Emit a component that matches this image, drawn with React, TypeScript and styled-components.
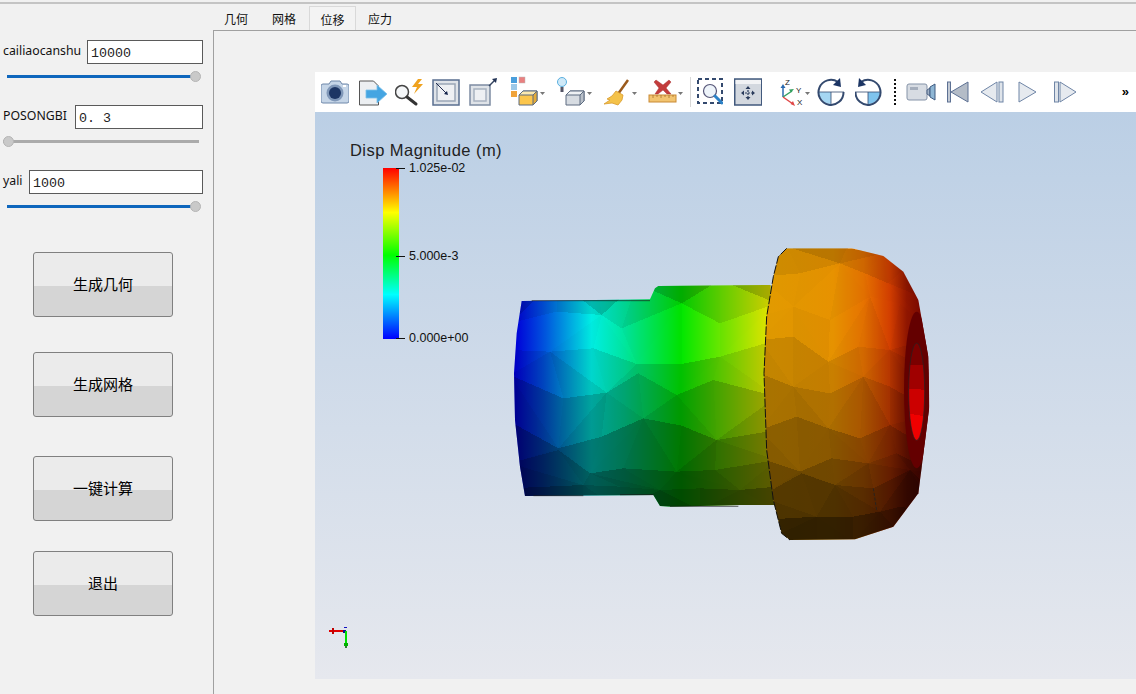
import React, { FC, ReactNode } from 'react';
import styled, { createGlobalStyle } from 'styled-components';

const GlobalStyle = createGlobalStyle`
  html, body { margin: 0; padding: 0; background: #f1f1f1; }
  body { font-family: "Noto Sans", "Noto Sans CJK SC", sans-serif; color: #000; }
`;

const Page = styled.div`
  width: 1136px;
  height: 694px;
  overflow: hidden;
  display: flex;
  flex-direction: column;
  background: #f1f1f1;
`;

const TopEdge = styled.div`
  height: 2px;
  margin-top: 2px;
  background: #c4c4c4;
  flex: none;
`;

const Body = styled.div`
  flex: 1;
  display: grid;
  grid-template-columns: 213px 1fr;
  min-height: 0;
`;

const Sidebar = styled.div`
  display: flex;
  flex-direction: column;
  padding-top: 36px;
`;

const ParamRow = styled.div`
  display: flex;
  align-items: center;
  justify-content: space-between;
  height: 24px;
  padding: 0 10px 0 3px;
`;

const ParamLabel = styled.span`
  font-size: 12.3px;
  line-height: 16px;
  margin-top: -3px;
  color: #111;
  white-space: nowrap;
`;

const ParamInput = styled.div<{ $w: number }>`
  width: ${(p) => p.$w}px;
  height: 24px;
  box-sizing: border-box;
  border: 1px solid #5a5a5a;
  background: #fff;
  padding: 1px 0 0 3px;
  font: 13.33px/23px "Liberation Mono", monospace;
  color: #222;
`;

const SliderTrack = styled.div<{ $on: boolean }>`
  position: relative;
  height: 3px;
  margin-top: 11px;
  margin-bottom: 27px;
  background: ${(p) => (p.$on ? '#0f67bd' : '#ababab')};
  margin-left: ${(p) => (p.$on ? '7px' : '3px')};
  margin-right: ${(p) => (p.$on ? '17px' : '14px')};
`;

const SliderKnob = styled.div<{ $on: boolean }>`
  position: absolute;
  top: -4px;
  ${(p) => (p.$on ? 'right: -5px;' : 'left: 0;')}
  width: 11px;
  height: 11px;
  box-sizing: border-box;
  border-radius: 50%;
  background: #c9c9c9;
  border: 1px solid #b5b5b5;
`;

const ActionButton = styled.div<{ $mt: number }>`
  width: 140px;
  height: 65px;
  box-sizing: border-box;
  margin: ${(p) => p.$mt}px 0 0 33px;
  border: 1px solid #808080;
  border-radius: 3px;
  background: linear-gradient(#ebebeb 0 52%, #d5d5d5 52% 100%);
  display: flex;
  align-items: center;
  justify-content: center;
  font: 15px/20px "Noto Sans CJK SC", sans-serif;
  padding-bottom: 1px;
`;

const Main = styled.div`
  display: flex;
  flex-direction: column;
  min-width: 0;
`;

const TabBar = styled.div`
  height: 24px;
  margin: 2px 0 0 -1px;
  display: flex;
  align-items: stretch;
  flex: none;
`;

const Tab = styled.div<{ $active?: boolean }>`
  width: 48px;
  box-sizing: border-box;
  padding-top: 2px;
  display: flex;
  align-items: center;
  justify-content: center;
  font: 12px/16px "Noto Sans CJK SC", sans-serif;
  color: #111;
  ${(p) =>
    p.$active ? 'border: 1px solid #d9d9d9; border-bottom: 0; background: #f3f3f3; margin: 0 0 0 1px; width: 47px;' : ''}
`;

const Pane = styled.div`
  flex: 1;
  border-left: 1px solid #a0a0a0;
  border-top: 1px solid #a0a0a0;
  padding: 41px 0 15px 101px;
  display: flex;
  flex-direction: column;
  min-height: 0;
`;

const Toolbar = styled.div`
  height: 40px;
  background: #fff;
  display: flex;
  align-items: center;
  padding-left: 6px;
  flex: none;
`;

const ToolSlot = styled.div<{ $gap: number }>`
  margin-left: ${(p) => p.$gap}px;
  height: 40px;
  flex: none;
  svg { display: block; }
`;

const ToolSeparator = styled.div<{ $gap: number }>`
  margin-left: ${(p) => p.$gap}px;
  width: 1px;
  height: 30px;
  background: #d8d8d8;
  flex: none;
`;

const DottedSeparator = styled.div<{ $gap: number }>`
  margin-left: ${(p) => p.$gap}px;
  width: 0;
  height: 26px;
  border-left: 2px dotted #111;
  flex: none;
`;

const Overflow = styled.div`
  margin-left: auto;
  padding-right: 7px;
  font: bold 13px/16px "Liberation Sans", sans-serif;
`;

const Scene = styled.div`
  flex: 1;
  position: relative;
  background: linear-gradient(#bbcfe5, #e6e8ee);
  overflow: hidden;
`;

const ScaleBar = styled.div`
  position: absolute;
  left: 35px;
  top: 28px;
  width: 170px;
  height: 210px;
`;

const ScaleTitle = styled.div`
  font: 16.5px/20px "Liberation Sans", sans-serif;
  letter-spacing: 0.45px;
  color: #222;
  white-space: nowrap;
`;

const ColorRamp = styled.div`
  position: absolute;
  left: 33px;
  top: 28px;
  width: 16px;
  height: 171px;
  background: linear-gradient(#ff0000 0, #ffff00 26%, #00ff00 51%, #00ffff 74%, #0000ff 100%);
`;

const ScaleTick = styled.div<{ $top: number }>`
  position: absolute;
  left: 46px;
  top: ${(p) => p.$top}px;
  width: 9px;
  height: 1px;
  background: #111;
`;

const ScaleValue = styled.div<{ $top: number }>`
  position: absolute;
  left: 59px;
  top: ${(p) => p.$top - 7}px;
  font: 12.5px/15px "Liberation Sans", sans-serif;
  color: #111;
  white-space: nowrap;
`;

const ModelLayer = styled.svg`
  position: absolute;
  left: 185px;
  top: 128px;
`;

const AxesLayer = styled.svg`
  position: absolute;
  left: 10px;
  bottom: 24px;
`;

// ---- mesh ----
type Pt = [number, number];

const shaftRows: Pt[][] = [
  [[30, 110], [170, 120], [290, 125], [410, 130], [545, 125], [660, 120], [830, 110]],
  [[30, 250], [170, 215], [305, 225], [365, 265], [545, 190], [660, 250], [830, 190]],
  [[30, 330], [150, 335], [280, 325], [410, 372], [545, 372], [660, 350], [830, 300]],
  [[30, 405], [190, 475], [320, 458], [415, 400], [530, 465], [640, 420], [830, 470]],
  [[30, 545], [175, 625], [305, 590], [430, 535], [545, 557], [650, 600], [830, 570]],
  [[30, 670], [175, 630], [270, 700], [370, 685], [530, 695], [645, 690], [830, 660]],
  [[30, 745], [250, 735], [360, 740], [480, 750], [600, 745], [720, 750], [830, 740]],
  [[30, 810], [250, 810], [360, 810], [480, 810], [600, 810], [720, 810], [830, 810]],
];

const headRows: Pt[][] = [
  [[780, 10], [860, 20], [1040, 25], [1150, 40], [1210, 90], [1310, 150]],
  [[780, 110], [900, 100], [1020, 70], [1095, 100], [1165, 130], [1310, 190]],
  [[780, 230], [880, 200], [990, 240], [1110, 170], [1200, 190], [1310, 290]],
  [[780, 300], [880, 290], [985, 365], [1075, 320], [1170, 330], [1310, 400]],
  [[780, 400], [880, 440], [990, 460], [1090, 410], [1170, 440], [1310, 520]],
  [[780, 570], [890, 530], [985, 565], [1080, 595], [1170, 555], [1310, 640]],
  [[780, 655], [900, 695], [995, 655], [1105, 670], [1190, 640], [1310, 700]],
  [[780, 770], [905, 700], [1005, 735], [1120, 745], [1230, 690], [1310, 770]],
  [[780, 840], [950, 830], [1060, 830], [1140, 815], [1200, 800], [1310, 820]],
  [[780, 910], [950, 905], [1060, 905], [1140, 890], [1190, 870], [1310, 870]],
];

const lerpTable = (table: Pt[], v: number) => {
  for (let i = 1; i < table.length; i++) {
    if (v <= table[i][0]) {
      const [x0, y0] = table[i - 1];
      const [x1, y1] = table[i];
      return y0 + ((y1 - y0) * (Math.max(v, x0) - x0)) / (x1 - x0);
    }
  }
  return table[table.length - 1][1];
};

const shaftShade: Pt[] = [[130, 0.62], [170, 0.82], [200, 1], [300, 1], [400, 0.86], [500, 0.72], [650, 0.5], [740, 0.36], [800, 0.3]];
const headShade: Pt[] = [[25, 0.72], [60, 0.9], [100, 0.95], [230, 1], [400, 0.86], [500, 0.74], [650, 0.55], [750, 0.4], [880, 0.22]];

const facets = (rows: Pt[][], table: Pt[]) => {
  const out: { points: string; dark: number }[] = [];
  let seed = 7;
  for (let r = 0; r < rows.length - 1; r++) {
    const midY = (rows[r][2][1] + rows[r + 1][2][1]) / 2;
    for (let c = 0; c < rows[r].length - 1; c++) {
      const a = rows[r][c];
      const b = rows[r][c + 1];
      const d = rows[r + 1][c];
      const e = rows[r + 1][c + 1];
      const tris: Pt[][] = (r + c) % 2 ? [[a, b, e], [a, e, d]] : [[a, b, d], [b, e, d]];
      tris.forEach((t) => {
        seed = (seed * 31 + 11) % 101;
        const cy = (t[0][1] + t[1][1] + t[2][1]) / 3;
        const shade = 0.6 * lerpTable(table, cy) + 0.4 * lerpTable(table, midY) - (seed / 101) * 0.035;
        out.push({
          points: t.map((p) => p.join(',')).join(' '),
          dark: Math.max(0, Math.min(1, 1 - shade)),
        });
      });
    }
  }
  return out;
};

const shaftOutline =
  '65,183 450,178 465,145 475,138 812,135 832,795 720,795 510,800 480,798 460,765 75,768 60,680 45,540 42,400 50,280';
const headOutline =
  '860,25 1055,25 1150,48 1210,95 1255,180 1285,350 1288,500 1255,760 1180,860 1065,898 870,900 845,880 820,780 800,630 792,400 800,230 820,110 835,50';

const MeshModel: FC = () => (
  <ModelLayer width={440} height={310} viewBox="0 0 1320 930">
    <defs>
      <linearGradient id="shaftMap" gradientUnits="userSpaceOnUse" x1="45" y1="0" x2="810" y2="0">
        <stop offset="0" stopColor="#0000dc" />
        <stop offset="0.11" stopColor="#0050e0" />
        <stop offset="0.3" stopColor="#00f2e8" />
        <stop offset="0.43" stopColor="#00e8a0" />
        <stop offset="0.65" stopColor="#00e800" />
        <stop offset="0.79" stopColor="#60e800" />
        <stop offset="1" stopColor="#e8e800" />
      </linearGradient>
      <linearGradient id="headMap" gradientUnits="userSpaceOnUse" x1="790" y1="0" x2="1290" y2="0">
        <stop offset="0" stopColor="#e8a000" />
        <stop offset="0.42" stopColor="#f09800" />
        <stop offset="0.6" stopColor="#f07800" />
        <stop offset="0.76" stopColor="#d84000" />
        <stop offset="0.86" stopColor="#981800" />
        <stop offset="1" stopColor="#700000" />
      </linearGradient>
      <clipPath id="shaftClip"><polygon points={shaftOutline} /></clipPath>
      <clipPath id="headClip"><polygon points={headOutline} /></clipPath>
    </defs>
    <g clipPath="url(#shaftClip)">
      <rect x="0" y="100" width="860" height="730" fill="url(#shaftMap)" />
      {facets(shaftRows, shaftShade).map((f, i) => (
        <polygon key={i} points={f.points} fill="#000" fillOpacity={f.dark} shapeRendering="crispEdges" />
      ))}
    </g>
    <path d="M95 182H450M100 767H250M360 764H460M510 799H715" stroke="#1a1a1a" strokeWidth="2" fill="none" />
    <g clipPath="url(#headClip)">
      <rect x="780" y="0" width="540" height="930" fill="url(#headMap)" />
      {facets(headRows, headShade).map((f, i) => (
        <polygon key={i} points={f.points} fill="#000" fillOpacity={f.dark} shapeRendering="crispEdges" />
      ))}
      <ellipse cx="1250" cy="450" rx="38" ry="235" fill="#640000" />
    </g>
    <clipPath id="holeClip"><ellipse cx="1250" cy="455" rx="24" ry="146" /></clipPath>
    <g clipPath="url(#holeClip)" shapeRendering="crispEdges">
      <rect x="1220" y="305" width="60" height="72" fill="#7a0000" />
      <polygon points="1220,375 1280,375 1280,450 1220,445" fill="#a00000" />
      <polygon points="1220,445 1280,450 1280,530 1220,520" fill="#cc0000" />
      <polygon points="1220,520 1280,530 1280,610 1220,610" fill="#f00000" />
    </g>
    <ellipse cx="1250" cy="455" rx="24" ry="146" fill="none" stroke="#222" strokeWidth="2" />
    <path
      d="M860 25L835 50L820 110L800 230L792 400L800 630L820 780L845 880L870 900"
      fill="none"
      stroke="#111"
      strokeWidth="3"
      strokeDasharray="26 5"
    />
    <path d="M1120 745L1130 812" fill="none" stroke="#222" strokeWidth="2.5" strokeDasharray="9 5" />
  </ModelLayer>
);

// ---- toolbar icons ----
const Ico: FC<{ w: number; gap: number; children: ReactNode }> = ({ w, gap, children }) => (
  <ToolSlot $gap={gap}>
    <svg width={w} height={40} viewBox={`0 0 ${w} 40`}>{children}</svg>
  </ToolSlot>
);

const Caret: FC<{ x: number; y: number }> = ({ x, y }) => <path d={`M${x} ${y}h5l-2.5 3z`} fill="#777" />;

const Cube: FC<{ x: number; y: number; fill: string; top: string; side: string }> = ({ x, y, fill, top, side }) => (
  <g stroke="#5c6b80" strokeWidth="1" strokeLinejoin="round">
    <path d={`M${x} ${y + 4}l4-4h14v10l-4 4h-14z`} fill={fill} />
    <path d={`M${x} ${y + 4}l4-4h14l-4 4z`} fill={top} />
    <path d={`M${x + 14} ${y + 4}l4-4v10l-4 4z`} fill={side} />
  </g>
);

const Toolbox: FC = () => (
  <Toolbar>
    {/* camera */}
    <Ico w={28} gap={0}>
      <path d="M2 12h6l2-3h9l2 3h5q2 0 2 2v15q0 2-2 2H2q-2 0-2-2V14q0-2 2-2z" fill="#c5d5e7" stroke="#6f88aa" />
      <circle cx="14" cy="21" r="8.5" fill="#7f97b8" />
      <circle cx="14" cy="21" r="6" fill="#1c3564" />
      <rect x="22" y="13" width="3" height="2" fill="#fff" />
    </Ico>
    {/* save data */}
    <Ico w={28} gap={10}>
      <path d="M0.5 9h14l5 5v19h-19z" fill="#eceff2" stroke="#555" />
      <path d="M7 18h11v-5l10 9-10 9v-5H7z" fill="#45a5e2" stroke="#7cc0ea" strokeWidth="0.8" />
    </Ico>
    {/* reset / auto-apply zoom */}
    <Ico w={28} gap={8}>
      <circle cx="7" cy="20" r="6.5" fill="#f4f6f8" stroke="#444" strokeWidth="1.5" />
      <path d="M12 25l9 7" stroke="#333" strokeWidth="3" strokeLinecap="round" />
      <path d="M23 7l-6 8h5l-3 7 9-10h-5l4-5z" fill="#efa21e" />
    </Ico>
    <Ico w={28} gap={9}>
      <rect x="1" y="8" width="26" height="25" fill="#dfe3e8" stroke="#5a6f90" strokeWidth="1.5" />
      <rect x="5" y="12" width="18" height="17" fill="#eef0f3" stroke="#9aa6b6" strokeWidth="1.5" />
      <path d="M4 11l11 11" stroke="#222c50" strokeWidth="1" />
      <path d="M16 23l-4-1 3-3z" fill="#14244c" />
    </Ico>
    <Ico w={28} gap={9}>
      <rect x="1" y="13" width="20" height="20" fill="#dfe3e8" stroke="#7d8ca3" strokeWidth="1.5" />
      <rect x="5" y="17" width="12" height="12" fill="#eef0f3" stroke="#a8b2c0" strokeWidth="1.5" />
      <path d="M20 14l6-6" stroke="#33435f" strokeWidth="1.5" />
      <path d="M28 6l-5 1 4 4z" fill="#223355" />
    </Ico>
    {/* representation cube */}
    <Ico w={35} gap={13}>
      <rect x="1" y="5" width="6" height="6" fill="#4a9fdc" />
      <rect x="9" y="5" width="6" height="6" fill="#e98080" stroke="#bbb" strokeWidth="0.5" />
      <rect x="1" y="12" width="6" height="6" fill="#9cc8e8" />
      <rect x="1" y="19" width="6" height="6" fill="#f0a33a" />
      <Cube x={9} y={19} fill="#fcc64c" top="#fbe9b0" side="#e2ab3a" />
      <Caret x={30} y={20} />
    </Ico>
    {/* light cube */}
    <Ico w={36} gap={11}>
      <circle cx="6" cy="10" r="4.5" fill="#cfe9f8" stroke="#5ab0e0" />
      <rect x="4.5" y="15" width="3" height="5" fill="#556" />
      <Cube x={10} y={19} fill="#d7dce2" top="#eef1f4" side="#b9c0c9" />
      <Caret x={31} y={20} />
    </Ico>
    {/* broom */}
    <Ico w={34} gap={11}>
      <path d="M25 8L15 22" stroke="#9a5a1c" strokeWidth="2.5" />
      <path d="M13 19l7 4-1 5-4 5-6-2-8 1 6-4-3-1 5-3z" fill="#f4c24a" stroke="#d89a2c" strokeWidth="0.8" />
      <Caret x={29} y={20} />
    </Ico>
    {/* delete ruler */}
    <Ico w={36} gap={11}>
      <path d="M8 8l7 5 6-5 2 2-5 6 5 6h-4l-4-4-5 4h-3l4-6-5-6z" fill="#c33c3c" stroke="#a33" strokeWidth="0.5" />
      <rect x="1" y="23" width="27" height="7" fill="#f2c470" stroke="#c98a34" />
      <path d="M5 23v3M9 23v2M13 23v3M17 23v2M21 23v3M25 23v2" stroke="#a8742c" strokeWidth="0.8" />
      <Caret x={30} y={20} />
    </Ico>
    <ToolSeparator $gap={6} />
    {/* zoom to box */}
    <Ico w={26} gap={6}>
      <rect x="1" y="7" width="24" height="24" fill="none" stroke="#33496e" strokeWidth="2" strokeDasharray="4 3" />
      <circle cx="13" cy="19" r="6.5" fill="#eef4fa" stroke="#557" strokeWidth="1.2" />
      <path d="M18 24l7 7" stroke="#2c82c8" strokeWidth="3" strokeLinecap="round" />
    </Ico>
    {/* fit */}
    <Ico w={28} gap={11}>
      <rect x="0.75" y="7" width="27" height="26" fill="#d3d8df" stroke="#42597d" strokeWidth="1.5" />
      <rect x="1.5" y="8" width="25.5" height="4" fill="#f2f3f5" />
      <path d="M14 15v12M8 21h12" stroke="#2b3c5c" strokeWidth="1.2" strokeDasharray="2 1" />
      <path d="M14 14l-2.5 3h5zM14 28l-2.5-3h5zM7 21l3-2.5v5zM21 21l-3-2.5v5z" fill="#2b3c5c" />
    </Ico>
    {/* axes */}
    <Ico w={35} gap={18}>
      <path d="M3 25V14" stroke="#2c6bb0" strokeWidth="1.5" />
      <path d="M3 12l-2.500 4h5z" fill="#2c6bb0" />
      <path d="M3 25l9-6" stroke="#35a060" strokeWidth="1.5" />
      <path d="M14 17l-5 .5 2 3z" fill="#35a060" />
      <path d="M3 25l10 7" stroke="#e04848" strokeWidth="1.5" />
      <path d="M15 34l-2-5-2.500 3z" fill="#e04848" />
      <text x="5" y="13" fontFamily="Liberation Sans" fontSize="8" fill="#222">Z</text>
      <text x="16" y="21" fontFamily="Liberation Sans" fontSize="8" fill="#222">Y</text>
      <text x="17" y="33" fontFamily="Liberation Sans" fontSize="8" fill="#222">X</text>
      <Caret x={25} y={20} />
    </Ico>
    {/* rotate right */}
    <Ico w={28} gap={2}>
      <path d="M14 20H2a12 12 0 0 0 12 12z" fill="#a5d6f2" />
      <path d="M21 10A12.5 12.5 0 1 0 26.500 20" fill="none" stroke="#33496e" strokeWidth="2" />
      <path d="M2 20h25M14 20v12" stroke="#33496e" strokeWidth="0.8" />
      <path d="M23 6l1 9-8-2z" fill="#1c3564" />
    </Ico>
    {/* rotate left */}
    <Ico w={27} gap={10}>
      <path d="M13 20h12a12 12 0 0 1-12 12z" fill="#7fc4ee" />
      <path d="M6 10A12.500 12.500 0 1 1 0.500 20" fill="none" stroke="#33496e" strokeWidth="2" />
      <path d="M0 20h25M13 20v12" stroke="#33496e" strokeWidth="0.8" />
      <path d="M4 6l-1 9 8-2z" fill="#1c3564" />
    </Ico>
    <DottedSeparator $gap={12} />
    {/* camera clip */}
    <Ico w={30} gap={10}>
      <rect x="1" y="12" width="20" height="16" rx="2" fill="#d7dce3" stroke="#8593a8" />
      <rect x="4" y="15" width="8" height="3" fill="#a5aebc" />
      <path d="M21 18l3-2v8l-3-2z" fill="#9fb0c5" stroke="#4d6384" />
      <path d="M24 15l5-3v16l-5-3z" fill="#8eb6d4" stroke="#3f5a80" />
    </Ico>
    {/* first frame */}
    <Ico w={22} gap={11}>
      <rect x="0.5" y="10" width="3" height="20" fill="#c3cad4" stroke="#5c7093" />
      <path d="M21 10v20L4 20z" fill="#b4bcc7" stroke="#5c7093" />
    </Ico>
    {/* previous frame */}
    <Ico w={24} gap={11}>
      <path d="M17 10v20L1 20z" fill="#e6eaef" stroke="#6f85a6" />
      <rect x="19" y="10" width="4" height="20" fill="#dfe4ea" stroke="#6f85a6" />
    </Ico>
    {/* play */}
    <Ico w={19} gap={14}>
      <path d="M1 10v20l17-10z" fill="#e6eaef" stroke="#6f85a6" />
    </Ico>
    {/* next frame */}
    <Ico w={23} gap={17}>
      <rect x="0.500" y="10" width="4" height="20" fill="#dfe4ea" stroke="#6f85a6" />
      <path d="M6 10v20l16-10z" fill="#e6eaef" stroke="#6f85a6" />
    </Ico>
    <Overflow>»</Overflow>
  </Toolbar>
);

const Axes: FC = () => (
  <AxesLayer width={30} height={30} viewBox="0 0 30 30">
    <g shapeRendering="crispEdges">
      <rect x="4" y="5" width="15" height="2" fill="#e00000" />
      <rect x="7" y="3" width="2" height="6" fill="#c00000" />
      <rect x="18" y="5" width="3" height="3" fill="#10108c" />
      <rect x="19" y="2" width="3" height="1" fill="#1010c0" />
      <rect x="20" y="6" width="2" height="17" fill="#00e000" />
      <rect x="19" y="18" width="4" height="3" fill="#00b000" />
      <rect x="20" y="21" width="2" height="2" fill="#308030" />
    </g>
  </AxesLayer>
);

type Param = { label: string; value: string; on: boolean; inputWidth: number };

const params: Param[] = [
  { label: 'cailiaocanshu', value: '10000', on: true, inputWidth: 116 },
  { label: 'POSONGBI', value: '0. 3', on: false, inputWidth: 128 },
  { label: 'yali', value: '1000', on: true, inputWidth: 174 },
];

const actions = [
  { text: '生成几何', mt: 17 },
  { text: '生成网格', mt: 35 },
  { text: '一键计算', mt: 39 },
  { text: '退出', mt: 30 },
];

const App: FC = () => (
  <Page>
    <GlobalStyle />
    <TopEdge />
    <Body>
      <Sidebar>
        {params.map((p) => (
          <div key={p.label}>
            <ParamRow>
              <ParamLabel>{p.label}</ParamLabel>
              <ParamInput $w={p.inputWidth}>{p.value}</ParamInput>
            </ParamRow>
            <SliderTrack $on={p.on}>
              <SliderKnob $on={p.on} />
            </SliderTrack>
          </div>
        ))}
        {actions.map((a) => (
          <ActionButton key={a.text} $mt={a.mt}>{a.text}</ActionButton>
        ))}
      </Sidebar>
      <Main>
        <TabBar>
          <Tab>几何</Tab>
          <Tab>网格</Tab>
          <Tab $active>位移</Tab>
          <Tab>应力</Tab>
        </TabBar>
        <Pane>
          <Toolbox />
          <Scene>
            <ScaleBar>
              <ScaleTitle>Disp Magnitude (m)</ScaleTitle>
              <ColorRamp />
              <ScaleTick $top={28} />
              <ScaleTick $top={116} />
              <ScaleTick $top={198} />
              <ScaleValue $top={28}>1.025e-02</ScaleValue>
              <ScaleValue $top={116}>5.000e-3</ScaleValue>
              <ScaleValue $top={198}>0.000e+00</ScaleValue>
            </ScaleBar>
            <MeshModel />
            <Axes />
          </Scene>
        </Pane>
      </Main>
    </Body>
  </Page>
);

export default App;
